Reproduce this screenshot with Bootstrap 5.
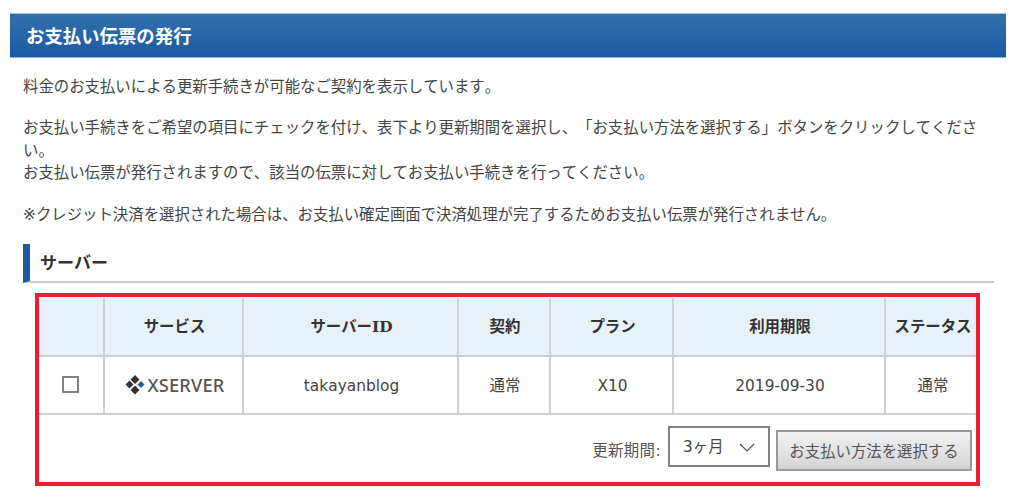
<!DOCTYPE html>
<html lang="ja">
<head>
<meta charset="utf-8">
<title>お支払い伝票の発行</title>
<link rel="stylesheet" href="https://cdn.jsdelivr.net/npm/bootstrap@5.3.0/dist/css/bootstrap.min.css">
<style>
html,body{height:503px;overflow:hidden}
body{background:#fff;color:#444;font-family:"DejaVu Sans","Noto Sans CJK JP",sans-serif;font-size:15.4px;line-height:22.4px;text-spacing-trim:space-all;font-kerning:none}
.pagewrap{padding:13px 18px 0 10px}
.pagetitle{height:45px;margin:0;padding:0 16px;display:flex;align-items:center;color:#fff;font-size:18.4px;font-weight:700;background:linear-gradient(#3270ab,#1a5aa3);border-top:1px solid #a9c3de;border-bottom:1px solid #8fb2d8;font-family:"Noto Sans CJK JP",sans-serif}
.intro{padding:0 13px;margin-top:18px}
.intro p{margin:0 0 19px}
.sectionhead{margin:-1px 12px 0 13px;height:39px;padding-left:10px;padding-bottom:1px;display:flex;align-items:center;border-left:7px solid #1a5aa3;border-bottom:2px solid #ccc;font-size:17px;font-weight:700;color:#333;font-family:"Noto Sans CJK JP",sans-serif}
.redbox{margin:10px 26px 0 25px;border:4px solid #ed1c2e;height:193px;overflow:hidden;padding-top:1px}
.srvtable{table-layout:fixed;width:941px;margin:0;border-collapse:collapse;color:#444}
.srvtable th,.srvtable td{border:2px solid #d0d0d0;text-align:center;vertical-align:middle;padding:2px 0 0 2px;background:#fff;color:#444;box-shadow:none;font-size:15.4px}
.srvtable tr>*:first-child{border-left:0;padding:2px 2px 0 0}
.srvtable tr>*:last-child{border-right:0;padding-left:0}
.srvtable thead tr>*{border-top:0}
.srvtable th{background:#e8f0f8;height:58px;font-weight:700;color:#333}
.srvtable td{height:58px}
.srvtable .c1{width:65px}.srvtable .c2{width:139px}.srvtable .c3{width:215px}.srvtable .c4{width:92px}.srvtable .c5{width:123px}.srvtable .c6{width:212px}.srvtable .c7{width:95px}
.idmark{font-family:"DejaVu Serif",serif}
.fakecheck{width:17px;height:17px;border:2px solid #808080;margin:-3px auto 0;display:block;background:#fff}
.xlogo{display:inline-flex;align-items:center;gap:1px;color:#555;font-family:"Noto Sans",sans-serif;font-weight:500;font-size:18.2px;letter-spacing:.2px;line-height:1;margin-top:5px}
.actionbar{height:72px;padding:0 4px 6px 0;color:#555}
.periodlabel{margin-right:7px;margin-top:7px;letter-spacing:.4px}
.periodsel{width:102px;height:41px;border:2px solid #808080;display:flex;align-items:center;padding:2px 0 0 13px;color:#444;margin-right:6px;margin-top:-4px}
.chev{margin-left:auto;margin-right:13px}
.paybtn{width:196px;height:41px;border:2px solid #999;border-radius:0;background:linear-gradient(#f2f2f2,#d4d4d4);color:#555;font-size:15.4px;padding:0;margin-top:5px;font-family:"Noto Sans CJK JP",sans-serif}
</style>
</head>
<body>
<div class="pagewrap">
  <h1 class="pagetitle">お支払い伝票の発行</h1>
  <div class="intro">
    <p>料金のお支払いによる更新手続きが可能なご契約を表示しています。</p>
    <p>お支払い手続きをご希望の項目にチェックを付け、表下より更新期間を選択し、「お支払い方法を選択する」ボタンをクリックしてください。<br>お支払い伝票が発行されますので、該当の伝票に対してお支払い手続きを行ってください。</p>
    <p>※クレジット決済を選択された場合は、お支払い確定画面で決済処理が完了するためお支払い伝票が発行されません。</p>
  </div>
  <h2 class="sectionhead">サーバー</h2>
  <div class="redbox">
    <table class="table srvtable">
      <thead>
        <tr>
          <th class="c1"></th><th class="c2">サービス</th><th class="c3">サーバー<span class="idmark">ID</span></th><th class="c4">契約</th><th class="c5">プラン</th><th class="c6">利用期限</th><th class="c7">ステータス</th>
        </tr>
      </thead>
      <tbody>
        <tr>
          <td><span class="fakecheck"></span></td>
          <td><span class="xlogo"><svg width="22" height="20" viewBox="0 0 22 20"><path fill="#333" d="M10 0l4.500 4.500L10 9 5.500 4.500zM4.500 5.500L8.500 9.500 4.500 13.500 .5 9.500zM10 10.500l4.500 4.500L10 19.500 5.500 15z"/><path fill="#1a62ad" d="M16 6l3.500 3.500L16 13l-3.500-3.500z"/></svg>XSERVER</span></td>
          <td>takayanblog</td>
          <td>通常</td>
          <td>X10</td>
          <td>2019-09-30</td>
          <td>通常</td>
        </tr>
      </tbody>
    </table>
    <div class="actionbar d-flex justify-content-end align-items-center">
      <span class="periodlabel">更新期間:</span>
      <div class="periodsel"><span>3ヶ月</span><svg class="chev" width="16" height="9" viewBox="0 0 16 9"><path fill="none" stroke="#555" stroke-width="1.200" d="M1 1l7 7 7-7"/></svg></div>
      <button type="button" class="btn paybtn">お支払い方法を選択する</button>
    </div>
  </div>
</div>
<script src="https://cdn.jsdelivr.net/npm/bootstrap@5.3.0/dist/js/bootstrap.bundle.min.js"></script>
</body>
</html>
